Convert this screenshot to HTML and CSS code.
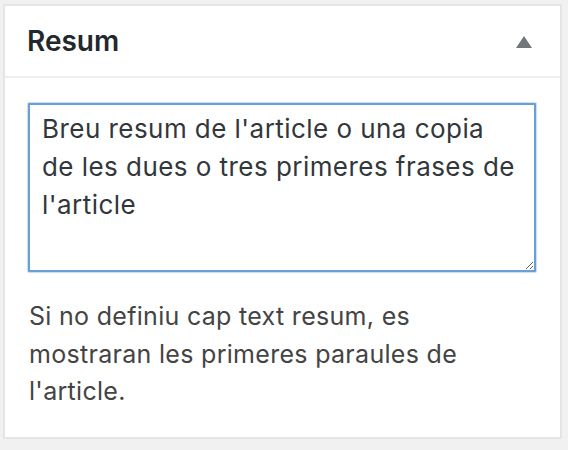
FILE: index.html
```html
<!DOCTYPE html>
<html>
<head>
<meta charset="utf-8">
<link rel="stylesheet" href="styles.css">
</head>
<body>
<div class="postbox">
  <div class="postbox-header">
    <h2 class="postbox-title">Resum</h2>
    <span class="toggle" aria-hidden="true"></span>
  </div>
  <div class="inside">
    <textarea class="excerpt">Breu resum de l'article o una copia de les dues o tres primeres frases de l'article</textarea>
    <p class="help">Si no definiu cap text resum, es mostraran les primeres paraules de l'article.</p>
  </div>
</div>
</body>
</html>
```

FILE: styles.css
```css
html, body {
  margin: 0;
  padding: 0;
  background: #f1f1f1;
  height: 450px;
  overflow: hidden;
}
.postbox {
  margin: 4px 6px 0 3px;
  background: #fff;
  border: 2px solid #e5e5e5;
  height: 435px;
  box-sizing: border-box;
  font-family: Inter, "Noto Sans", sans-serif;
}
.postbox-header {
  height: 72px;
  box-sizing: border-box;
  border-bottom: 2px solid #eeeeee;
  display: flex;
  align-items: center;
  justify-content: space-between;
  padding: 0 28px 0 22px;
}
.postbox-title {
  margin: 0;
  font-size: 28px;
  font-weight: 600;
  color: #23282d;
}
.toggle {
  width: 0;
  height: 0;
  border-left: 8px solid transparent;
  border-right: 8px solid transparent;
  border-bottom: 12px solid #72777c;
  margin-top: 2px;
}
.inside {
  padding: 25px 24px 0 23px;
}
.excerpt {
  display: block;
  width: 508px;
  height: 169px;
  box-sizing: border-box;
  border: 2px solid #6a9fd6;
  box-shadow: 0 0 1px 1px rgba(91,157,217,0.35);
  border-radius: 1px;
  padding: 5px 12px;
  margin: 0;
  font-family: Inter, "Noto Sans", sans-serif;
  font-size: 26px;
  letter-spacing: 0.45px;
  line-height: 38px;
  color: #32373c;
  resize: both;
  outline: none;
}
.help {
  margin: 26px 0 0 1px;
  font-size: 25px;
  letter-spacing: 0.3px;
  line-height: 37.5px;
  color: #444;
}
```
